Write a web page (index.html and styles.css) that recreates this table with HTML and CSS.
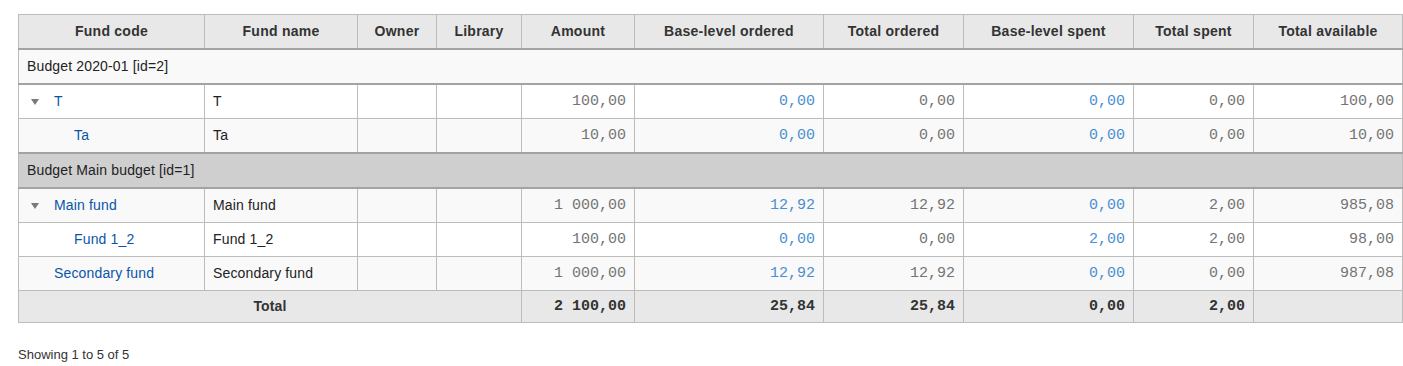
FILE: index.html
```html
<!DOCTYPE html>
<html lang="en">
<head>
<meta charset="utf-8">
<title>Funds</title>
<link rel="stylesheet" href="styles.css">
</head>
<body>
<div class="page">
  <table class="funds">
    <colgroup>
      <col class="c-code"><col class="c-name"><col class="c-owner"><col class="c-lib">
      <col class="c-amount"><col class="c-blo"><col class="c-to"><col class="c-bls">
      <col class="c-ts"><col class="c-ta">
    </colgroup>
    <thead>
      <tr>
        <th>Fund code</th><th>Fund name</th><th>Owner</th><th>Library</th><th>Amount</th>
        <th>Base-level ordered</th><th>Total ordered</th><th>Base-level spent</th><th>Total spent</th><th>Total available</th>
      </tr>
    </thead>
    <tbody>
      <tr class="budget odd"><td colspan="10">Budget 2020-01 [id=2]</td></tr>
      <tr class="even">
        <td><span class="indent lvl0"><svg class="expander" width="8" height="6" viewBox="0 0 8 6"><polygon points="0,0 8,0 4,6"/></svg></span><a href="#">T</a></td>
        <td>T</td><td></td><td></td>
        <td class="num">100,00</td><td class="num"><a href="#">0,00</a></td><td class="num">0,00</td>
        <td class="num"><a href="#">0,00</a></td><td class="num">0,00</td><td class="num">100,00</td>
      </tr>
      <tr class="odd">
        <td><span class="indent lvl1"></span><a href="#">Ta</a></td>
        <td>Ta</td><td></td><td></td>
        <td class="num">10,00</td><td class="num"><a href="#">0,00</a></td><td class="num">0,00</td>
        <td class="num"><a href="#">0,00</a></td><td class="num">0,00</td><td class="num">10,00</td>
      </tr>
      <tr class="budget selected"><td colspan="10">Budget Main budget [id=1]</td></tr>
      <tr class="odd">
        <td><span class="indent lvl0"><svg class="expander" width="8" height="6" viewBox="0 0 8 6"><polygon points="0,0 8,0 4,6"/></svg></span><a href="#">Main fund</a></td>
        <td>Main fund</td><td></td><td></td>
        <td class="num">1 000,00</td><td class="num"><a href="#">12,92</a></td><td class="num">12,92</td>
        <td class="num"><a href="#">0,00</a></td><td class="num">2,00</td><td class="num">985,08</td>
      </tr>
      <tr class="even">
        <td><span class="indent lvl1"></span><a href="#">Fund 1_2</a></td>
        <td>Fund 1_2</td><td></td><td></td>
        <td class="num">100,00</td><td class="num"><a href="#">0,00</a></td><td class="num">0,00</td>
        <td class="num"><a href="#">2,00</a></td><td class="num">2,00</td><td class="num">98,00</td>
      </tr>
      <tr class="odd">
        <td><span class="indent lvl0"></span><a href="#">Secondary fund</a></td>
        <td>Secondary fund</td><td></td><td></td>
        <td class="num">1 000,00</td><td class="num"><a href="#">12,92</a></td><td class="num">12,92</td>
        <td class="num"><a href="#">0,00</a></td><td class="num">0,00</td><td class="num">987,08</td>
      </tr>
    </tbody>
    <tfoot>
      <tr class="total">
        <th colspan="4">Total</th>
        <td class="num">2 100,00</td><td class="num">25,84</td><td class="num">25,84</td>
        <td class="num">0,00</td><td class="num">2,00</td><td></td>
      </tr>
    </tfoot>
  </table>
  <p class="info">Showing 1 to 5 of 5</p>
</div>
</body>
</html>
```
FILE: styles.css
```css
body {
  margin: 0;
  background: #fff;
  color: #222;
  font-family: "Liberation Sans", Arial, sans-serif;
  font-size: 14px;
}

.page {
  padding: 14px 1px 0 18px;
}

.funds {
  width: 1384px;
  table-layout: fixed;
  border-collapse: collapse;
  border: 1px solid #bcbcbc;
  letter-spacing: 0.15px;
}

.c-code { width: 186px; }
.c-name { width: 153px; }
.c-owner { width: 79px; }
.c-lib { width: 85px; }
.c-amount { width: 113px; }
.c-blo { width: 189px; }
.c-to { width: 140px; }
.c-bls { width: 170px; }
.c-ts { width: 120px; }
.c-ta { width: 149px; }

.funds th,
.funds td {
  border: 1px solid #bcbcbc;
  padding: 8px 8px;
  line-height: 17px;
  text-align: left;
  vertical-align: middle;
  white-space: nowrap;
}

.funds thead th {
  padding: 8px 8px;
  background: #e8e8e8;
  color: #333;
  font-weight: bold;
  text-align: center;
  letter-spacing: 0.25px;
  border-bottom: 2px solid #a3a3a3;
}

.funds tr.odd { background: #f9f9f9; }
.funds tr.even { background: #fff; }

.funds tr.budget td {
  border-top: 2px solid #a3a3a3;
  border-bottom: 2px solid #a3a3a3;
}

.funds tr.budget.selected { background: #d0cfd0; }

.funds a {
  color: #0b55a8;
  text-decoration: none;
}

.indent {
  display: inline-block;
  vertical-align: top;
  height: 17px;
}

.indent.lvl0 { width: 27px; }
.indent.lvl1 { width: 47px; }

.expander {
  display: block;
  margin: 6px 0 0 4px;
  fill: #7a7a7a;
}

.funds td.num {
  text-align: right;
  font-family: "Liberation Mono", "Courier New", monospace;
  font-size: 15px;
  letter-spacing: 0;
  color: #747474;
}

.funds td.num a {
  color: #4a8fd2;
}

.funds tfoot tr.total {
  background: #e8e8e8;
}

.funds tfoot th,
.funds tfoot td {
  padding: 7px 8px 7px;
}

.funds tfoot th {
  text-align: center;
  font-weight: bold;
  color: #333;
}

.funds tfoot td.num {
  font-weight: bold;
  color: #333;
}

.info {
  margin: 24px 0 0;
  font-size: 13px;
  line-height: 16px;
  color: #333;
}
```
